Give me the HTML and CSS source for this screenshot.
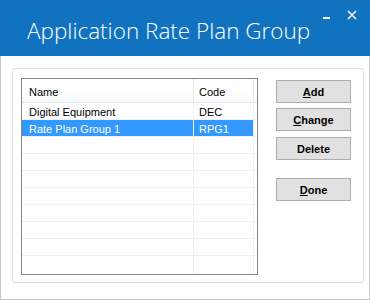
FILE: index.html
```html
<!DOCTYPE html>
<html>
<head>
<meta charset="utf-8">
<link rel="stylesheet" href="styles.css">
</head>
<body>
<div class="window">
  <div class="titlebar">
    <div class="title">Application Rate Plan Group</div>
    <div class="controls">
      <span class="min"></span>
      <svg class="close" width="10" height="10" viewBox="0 0 10 10"><path d="M1 1 L9 9 M9 1 L1 9" stroke="#fff" stroke-width="1.5"/></svg>
    </div>
  </div>
  <div class="content">
    <div class="group">
      <div class="list">
        <div class="row head"><div class="c1">Name</div><div class="c2">Code</div><div class="c3"></div></div>
        <div class="row"><div class="c1">Digital Equipment</div><div class="c2">DEC</div><div class="c3"></div></div>
        <div class="row sel"><div class="c1">Rate Plan Group 1</div><div class="c2">RPG1</div><div class="c3"></div></div>
        <div class="row"><div class="c1"></div><div class="c2"></div><div class="c3"></div></div>
        <div class="row"><div class="c1"></div><div class="c2"></div><div class="c3"></div></div>
        <div class="row"><div class="c1"></div><div class="c2"></div><div class="c3"></div></div>
        <div class="row"><div class="c1"></div><div class="c2"></div><div class="c3"></div></div>
        <div class="row"><div class="c1"></div><div class="c2"></div><div class="c3"></div></div>
        <div class="row"><div class="c1"></div><div class="c2"></div><div class="c3"></div></div>
        <div class="row"><div class="c1"></div><div class="c2"></div><div class="c3"></div></div>
        <div class="row last"><div class="c1"></div><div class="c2"></div><div class="c3"></div></div>
      </div>
      <div class="buttons">
        <button class="btn"><u>A</u>dd</button>
        <button class="btn"><u>C</u>hange</button>
        <button class="btn">Delete</button>
        <button class="btn done"><u>D</u>one</button>
      </div>
    </div>
  </div>
</div>
</body>
</html>
```
FILE: styles.css
```css
* { box-sizing: border-box; }
html, body { margin: 0; padding: 0; background: #fff; }
.window { width: 370px; height: 300px; display: flex; flex-direction: column; }
.titlebar { height: 56px; background: #1173bf; position: relative; flex: none; }
.title { position: absolute; left: 27px; top: 16px; color: #fff; font-family: "Open Sans", sans-serif; font-weight: 300; font-size: 22.5px; line-height: 30px; white-space: nowrap; }
.controls { position: absolute; top: 0; right: 0; }
.min { position: absolute; left: -47px; top: 17px; width: 7px; height: 2px; background: #fff; }
.close { position: absolute; left: -23px; top: 10px; }
.content { flex: 1; border: 1px solid #c8c8c8; border-top: none; padding: 12px 5px 16px 11px; background: #fff; }
.group { height: 100%; border: 1px solid #d5dde5; border-radius: 3px; padding: 9px 0 0 8px; display: flex; align-items: flex-start; }
.list { width: 237px; height: 197px; border: 1px solid #828790; background: #fff; font-family: "Liberation Sans", Arial, sans-serif; font-size: 11px; color: #000; overflow: hidden; }
.row { display: flex; height: 17px; border-bottom: 1px solid #f0f0f0; }
.row > div { line-height: 16px; padding-top: 1px; white-space: nowrap; }
.c1 { width: 172px; padding-left: 7px; border-right: 1px solid #f0f0f0; }
.c2 { width: 60px; padding-left: 5px; border-right: 1px solid #f0f0f0; }
.c3 { flex: 1; }
.row.head { height: 24px; border-bottom: 1px solid #e5e5e5; background: linear-gradient(#fff, #fff 60%, #f7f8f9); }
.row.head > div { line-height: 23px; padding-top: 2px; border-right-color: #e5e5e5; }
.row.sel .c1, .row.sel .c2 { background: #3399ff; color: #fff; }
.row.last { border-bottom: none; }
.buttons { margin-left: 18px; margin-top: 2px; display: flex; flex-direction: column; }
.btn { width: 75px; height: 23px; margin: 0 0 5px 0; padding: 0; border: 1px solid #adadad; background: #e1e1e1; font-family: "Liberation Sans", Arial, sans-serif; font-weight: bold; font-size: 11px; color: #000; }
.btn:nth-child(3) { margin-top: 1px; }
.btn.done { margin-top: 13px; }
```
